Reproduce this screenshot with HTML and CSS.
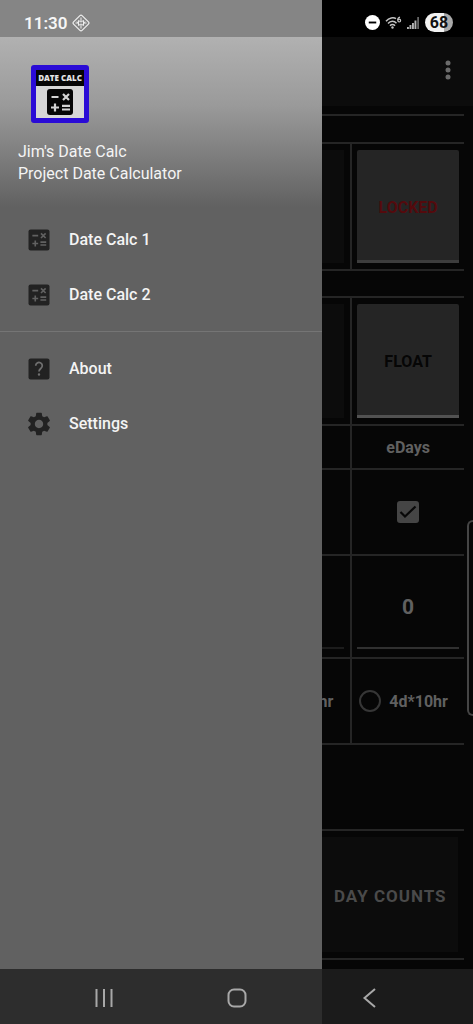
FILE: index.html
```html
<!DOCTYPE html>
<html lang="en">
<head>
<meta charset="utf-8">
<meta name="viewport" content="width=device-width, initial-scale=1">
<title>Jim's Date Calc</title>
<link rel="stylesheet" href="styles.css">
</head>
<body>
<div class="screen">
  <header class="status">
    <div class="status-left">
      <span class="clock">11:30</span>
      <svg class="status-diamond" viewBox="0 0 18 18" fill="none" stroke="#eee">
        <rect x="3" y="3" width="12" height="12" rx="1.5" transform="rotate(45 9 9)" stroke-width="1.200"/>
        <path d="M9 3.500v3.500M6.500 6.500L9 8l2.500-1.500M9 14.500V11M6.500 11.500L9 10l2.500 1.500M3.500 9H7M6.500 6.500v5M14.500 9H11M11.500 6.500v5M5 7.500l2 3M13 7.500l-2 3" stroke-width="1"/>
      </svg>
    </div>
    <div class="status-right">
      <svg class="dnd" viewBox="0 0 16 16"><circle cx="8" cy="8" r="8" fill="#fff"/><path d="M4 8h8" stroke="#000" stroke-width="2"/></svg>
      <svg class="wifi" viewBox="0 0 17 14" fill="none" stroke="#c4c4c4" stroke-width="1.500">
        <path d="M1 5.200C4.200 1.600 8.500 1.100 11 2.700M3 7.500c2.500-2.800 6.200-2.800 8.500-.3M5 9.700c1.500-1.600 3.500-1.600 5 0"/>
        <circle cx="7.500" cy="11.500" r="1.200" fill="#c4c4c4" stroke="none"/>
        <path d="M15 1.200c-1.600.4-2.300 1.500-2.300 3" stroke-width="1.200"/><circle cx="14.200" cy="4.600" r="1.400" stroke-width="1.200"/>
      </svg>
      <svg class="signal" viewBox="0 0 13 13" fill="#b4b4b4">
        <path d="M0 11h1.900v2H0zM2.500 9h1.900v4H2.500zM5 7h1.900v6H5zM7.500 4.500h1.900V13H7.500z"/><path d="M10.200 1H12v12h-1.800z" fill="#666"/>
      </svg>
      <span class="battery">68</span>
    </div>
  </header>

  <div class="appbar">
    <button class="overflow" aria-label="More options">
      <svg viewBox="0 0 6 20" fill="#6b6b6b"><circle cx="3" cy="3" r="2.500"/><circle cx="3" cy="10" r="2.500"/><circle cx="3" cy="17" r="2.500"/></svg>
    </button>
  </div>

  <main class="content">
    <div class="rule"></div>
    <section class="sheet sheet-date">
      <div class="row row-button">
        <div class="cell cell-wide"><div class="side-panel"></div></div>
        <div class="cell cell-last"><button class="toggle toggle-locked">LOCKED</button></div>
      </div>
    </section>
    <section class="sheet sheet-span">
      <div class="row row-button">
        <div class="cell cell-wide"><div class="side-panel"></div></div>
        <div class="cell cell-last"><button class="toggle toggle-float">FLOAT</button></div>
      </div>
      <div class="row row-head">
        <div class="cell cell-wide"></div>
        <div class="cell cell-last"><label for="edays">eDays</label></div>
      </div>
      <div class="row row-check">
        <div class="cell cell-wide"></div>
        <div class="cell cell-last">
          <span class="check">
            <input type="checkbox" id="edays" checked>
            <svg viewBox="0 0 22 22" fill="none" stroke="#080808" stroke-width="2.200"><path d="M3.500 11l4.500 4.500L18.500 5.500"/></svg>
          </span>
        </div>
      </div>
      <div class="row row-value">
        <div class="cell cell-wide"><div class="side-line"></div></div>
        <div class="cell cell-last"><input class="amount" type="text" value="0" aria-label="eDays value"></div>
      </div>
      <div class="row row-radio">
        <div class="cell cell-wide"><span class="side-unit">hr</span></div>
        <div class="cell cell-last"><label class="radio"><input type="radio" name="week"><span>4d*10hr</span></label></div>
      </div>
    </section>
    <section class="counts">
      <button class="day-counts">DAY COUNTS</button>
    </section>
    <div class="edge-handle"></div>
  </main>

  <aside class="drawer">
    <div class="drawer-head">
      <div class="logo">
        <div class="logo-title">DATE CALC</div>
        <svg viewBox="0 0 28 28"><rect x="1" y="1" width="26" height="26" rx="3" fill="#060606"/><path d="M5.500 9h7M17 6l6 6M23 6l-6 6M9 15.500v8M5 19.500h8M16 17.800h8M16 21.500h8" stroke="#d4d4d4" stroke-width="2.200"/></svg>
      </div>
      <div class="drawer-name">Jim's Date Calc</div>
      <div class="drawer-name">Project Date Calculator</div>
    </div>
    <nav class="menu">
      <a href="#calc1" class="menu-item">
        <svg viewBox="0 0 24 24"><rect x="3" y="3" width="18" height="18" rx="1.800" fill="#222"/><path d="M6.300 8.300h5M13.700 6.300l4 4M17.700 6.300l-4 4M8.800 12.500v5M6.300 15h5M13.200 13.800h5M13.200 16.300h5" stroke="#616161" stroke-width="1.400"/></svg>
        <span>Date Calc 1</span>
      </a>
      <a href="#calc2" class="menu-item">
        <svg viewBox="0 0 24 24"><rect x="3" y="3" width="18" height="18" rx="1.800" fill="#222"/><path d="M6.300 8.300h5M13.700 6.300l4 4M17.700 6.300l-4 4M8.800 12.500v5M6.300 15h5M13.200 13.800h5M13.200 16.300h5" stroke="#616161" stroke-width="1.400"/></svg>
        <span>Date Calc 2</span>
      </a>
    </nav>
    <nav class="menu menu-more">
      <a href="#about" class="menu-item">
        <svg viewBox="0 0 24 24"><rect x="3" y="3" width="18" height="18" rx="1.800" fill="#222"/><path d="M9.200 9.200a2.800 2.800 0 1 1 4.600 2.100c-1.100.9-1.800 1.300-1.800 2.900" fill="none" stroke="#707070" stroke-width="1.500"/><circle cx="12" cy="16.700" r="1" fill="#707070"/></svg>
        <span>About</span>
      </a>
      <a href="#settings" class="menu-item">
        <svg viewBox="0 0 24 24" fill="#222"><path d="M19.140 12.940c.04-.3.06-.61.06-.94 0-.32-.02-.64-.07-.94l2.030-1.580c.18-.14.23-.41.12-.61l-1.920-3.320c-.12-.22-.37-.29-.59-.22l-2.390.96c-.5-.38-1.030-.7-1.620-.94l-.36-2.540c-.04-.24-.24-.41-.48-.41h-3.840c-.24 0-.43.17-.47.41l-.36 2.540c-.59.24-1.130.57-1.620.94l-2.390-.96c-.22-.08-.47 0-.59.22L2.740 8.870c-.12.21-.08.47.12.61l2.030 1.580c-.05.3-.09.63-.09.94s.02.64.07.94l-2.030 1.580c-.18.14-.23.41-.12.61l1.920 3.320c.12.22.37.29.59.22l2.390-.96c.5.38 1.030.7 1.620.94l.36 2.540c.05.24.24.41.48.41h3.840c.24 0 .44-.17.47-.41l.36-2.540c.59-.24 1.130-.56 1.620-.94l2.390.96c.22.08.47 0 .59-.22l1.920-3.320c.12-.22.07-.47-.12-.61l-2.010-1.580zM12 15.600c-1.980 0-3.600-1.620-3.600-3.600s1.620-3.600 3.600-3.600 3.600 1.620 3.600 3.600-1.620 3.600-3.600 3.600z"/></svg>
        <span>Settings</span>
      </a>
    </nav>
  </aside>

  <footer class="navbar">
    <button aria-label="Recents"><svg viewBox="0 0 20 20"><path d="M2.500 1v18M10 1v18M17.500 1v18"/></svg></button>
    <button aria-label="Home"><svg viewBox="0 0 20 20"><rect x="1.500" y="1.500" width="17" height="17" rx="5.500"/></svg></button>
    <button aria-label="Back"><svg viewBox="0 0 20 20"><path d="M15 1L4.500 10 15 19"/></svg></button>
  </footer>
</div>
</body>
</html>
```
FILE: styles.css
```css
* {
  box-sizing: border-box;
}

body {
  margin: 0;
  background: #060606;
  font-family: Roboto, "Liberation Sans", sans-serif;
  font-size: 16px;
}

button,
input {
  font: inherit;
  color: inherit;
  margin: 0;
  padding: 0;
  border: 0;
  background: none;
}

svg {
  display: block;
  flex: none;
}

.screen {
  --drawer: 322px;
  --line: #252525;
  position: relative;
  display: flex;
  flex-direction: column;
  min-height: 100vh;
  overflow: hidden;
}

.status {
  position: relative;
  z-index: 2;
  display: flex;
  justify-content: space-between;
  align-items: center;
  height: 37px;
  padding: 8px 20px 0 24px;
  background: linear-gradient(90deg, #858585 var(--drawer), #000 var(--drawer));
}

.status-left,
.status-right {
  display: flex;
  align-items: center;
}

.status-left {
  gap: 5px;
}

.status-right {
  gap: 5px;
}

.clock {
  font-size: 17px;
  font-weight: 600;
  color: #f6f6f6;
}

.status-diamond {
  width: 18px;
  height: 18px;
}

.dnd {
  width: 15px;
  height: 15px;
}

.wifi {
  width: 17px;
  height: 14px;
}

.signal {
  width: 13px;
  height: 13px;
}

.battery {
  width: 28px;
  border-radius: 10px;
  background: linear-gradient(90deg, #f2f2f2 68%, #aaa 68%);
  color: #111;
  font-size: 16px;
  font-weight: 700;
  line-height: 19px;
  text-align: center;
}

.appbar {
  display: flex;
  justify-content: flex-end;
  align-items: center;
  height: 69px;
  padding: 0 12px 4px;
  background: #0c0c0c;
}

.overflow {
  display: flex;
  justify-content: center;
  width: 26px;
}

.overflow svg {
  width: 6px;
  height: 20px;
}

.content {
  position: relative;
  flex: 1;
  padding: 8px 9px;
}

.rule {
  height: 2px;
  background: var(--line);
}

.sheet {
  margin-top: 26px;
  border-top: 2px solid var(--line);
}

.sheet-span {
  margin-top: 25px;
}

.row {
  display: grid;
  grid-template-columns: 3fr 1fr;
  border-bottom: 2px solid var(--line);
}

.row-button {
  height: 127px;
}

.sheet-span .row-button {
  height: 128px;
}

.row-head {
  height: 44px;
}

.row-check {
  height: 86px;
}

.row-value {
  height: 103px;
}

.row-radio {
  height: 86px;
}

.cell {
  display: flex;
  align-items: center;
  justify-content: center;
  padding: 6px 5px;
  color: #606060;
  font-weight: 700;
}

.cell-wide {
  justify-content: flex-end;
  padding: 6px;
}

.cell-last {
  border-left: 2px solid var(--line);
}

.row-head .cell,
.row-radio .cell {
  padding-top: 0;
  padding-bottom: 0;
}

.side-panel {
  width: 100%;
  height: 100%;
  background: #0c0c0c;
}

.side-line {
  align-self: flex-end;
  width: 100%;
  height: 2px;
  margin-bottom: 2px;
  background: #1c1c1c;
}

.side-unit {
  padding-right: 11px;
}

.toggle {
  width: 100%;
  height: 100%;
  padding-top: 4px;
  border-radius: 2px 2px 0 0;
  border-bottom: 3px solid #3d3d3d;
  background: #252525;
  font-weight: 700;
}

.toggle-locked {
  color: #540a0d;
}

.toggle-float {
  border-bottom-color: #525252;
  color: #060606;
}

.check {
  position: relative;
  width: 22px;
  height: 22px;
}

.check input {
  display: block;
  appearance: none;
  width: 22px;
  height: 22px;
  border-radius: 3px;
  background: #454545;
}

.check svg {
  position: absolute;
  inset: 0;
  width: 22px;
  height: 22px;
  pointer-events: none;
}

.amount {
  align-self: flex-end;
  width: 100%;
  height: 82px;
  margin-bottom: 2px;
  border-bottom: 2px solid #303030;
  font-size: 21px;
  font-weight: 700;
  text-align: center;
}

.radio {
  display: flex;
  align-items: center;
  gap: 8px;
}

.radio input {
  appearance: none;
  width: 22px;
  height: 22px;
  border: 2px solid #363636;
  border-radius: 50%;
}

.row-radio .cell-last {
  justify-content: flex-start;
  padding-left: 7px;
}

.counts {
  display: flex;
  justify-content: flex-end;
  height: 131px;
  margin-top: 84px;
  padding: 6px;
  border-top: 2px solid var(--line);
  border-bottom: 2px solid var(--line);
}

.day-counts {
  width: 50%;
  padding: 2px 0 0 86px;
  background: #0c0c0c;
  color: #4a4a4a;
  font-size: 17px;
  font-weight: 700;
  letter-spacing: 1px;
}

.edge-handle {
  position: absolute;
  top: 414px;
  right: 0;
  width: 6px;
  height: 196px;
  border: 2px solid #454545;
  border-right: 0;
  border-radius: 6px 0 0 6px;
  background: #060606;
}

.drawer {
  position: absolute;
  z-index: 1;
  top: 0;
  bottom: 0;
  left: 0;
  width: var(--drawer);
  padding-top: 37px;
  background: #616161;
}

.drawer-head {
  height: 170px;
  padding: 28px 18px 0;
  background: linear-gradient(#b1b1b1, #9a9a9a 40%, #616161);
  color: #f4f4f4;
}

.logo {
  display: flex;
  flex-direction: column;
  align-items: center;
  width: 58px;
  height: 58px;
  margin: 0 13px 18px;
  border: 5px solid #2a0bd6;
  border-radius: 3px;
  background: #d6d6d6;
}

.logo-title {
  align-self: stretch;
  height: 16px;
  margin-bottom: 2px;
  background: #060606;
  color: #e4e4e4;
  font-family: "Open Sans", "Noto Sans", sans-serif;
  font-size: 8px;
  font-weight: 800;
  line-height: 16px;
  text-align: center;
  white-space: nowrap;
}

.logo svg {
  width: 28px;
  height: 28px;
}

.drawer-name {
  line-height: 22px;
}

.menu {
  display: flex;
  flex-direction: column;
  padding: 5px 0 9px;
}

.menu-more {
  padding-top: 9px;
  border-top: 1px solid #757575;
}

.menu-item {
  display: flex;
  align-items: center;
  gap: 16px;
  height: 55px;
  padding: 0 25px;
  color: #f4f4f4;
  font-weight: 500;
  text-decoration: none;
}

.menu-item svg {
  width: 28px;
  height: 28px;
}

.navbar {
  position: relative;
  z-index: 2;
  display: flex;
  height: 55px;
  padding: 2px 37px 0;
  background: linear-gradient(90deg, #2d2d2d var(--drawer), #1b1b1b var(--drawer));
}

.navbar button {
  display: flex;
  flex: 1;
  justify-content: center;
  align-items: center;
}

.navbar svg {
  width: 20px;
  height: 20px;
  fill: none;
  stroke: #a8a8a8;
  stroke-width: 2;
}
```
